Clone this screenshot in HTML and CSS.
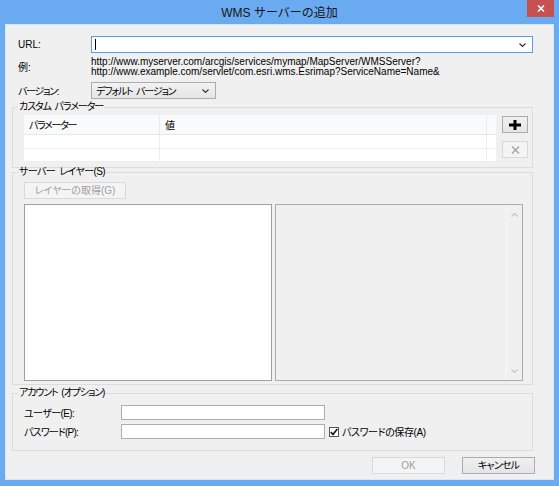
FILE: index.html
```html
<!DOCTYPE html>
<html lang="ja">
<head>
<meta charset="utf-8">
<title>WMS サーバーの追加</title>
<link rel="stylesheet" href="styles.css">
</head>
<body>
<div class="window">
  <div class="titlebar">
    <span class="title">WMS サーバーの追加</span>
    <div class="close">
      <svg width="8" height="7" viewBox="0 0 8 7"><path d="M1 0.5 L7 6.5 M7 0.5 L1 6.5" stroke="#fff" stroke-width="1.6" fill="none"/></svg>
    </div>
  </div>
  <div class="client">
    <div class="row url-row">
      <span class="label">URL:</span>
      <div class="combo">
        <span class="caret"></span>
        <svg class="chev" width="7" height="4" viewBox="0 0 7 4"><polyline points="0.5,0.5 3.5,3.5 6.5,0.5" fill="none" stroke="#333" stroke-width="1.1"/></svg>
      </div>
    </div>
    <div class="row example-row">
      <span class="label ex-label">例:</span>
      <div class="example">http://www.myserver.com/arcgis/services/mymap/MapServer/WMSServer?<br>http://www.example.com/servlet/com.esri.wms.Esrimap?ServiceName=Name&amp;</div>
    </div>
    <div class="row version-row">
      <span class="label ls13">バージョン:</span>
      <div class="select">
        <span class="ls12 ws">デフォルト バージョン</span>
        <svg class="chev" width="7" height="4" viewBox="0 0 7 4"><polyline points="0.5,0.5 3.5,3.5 6.5,0.5" fill="none" stroke="#333" stroke-width="1.1"/></svg>
      </div>
    </div>

    <fieldset class="group params">
      <legend class="ls11 ws">カスタム パラメーター</legend>
      <div class="params-body">
        <div class="grid">
          <div class="cell head ls13">パラメーター</div>
          <div class="cell head">値</div>
          <div class="cell head last"></div>
          <div class="cell"></div>
          <div class="cell"></div>
          <div class="cell last"></div>
          <div class="cell"></div>
          <div class="cell"></div>
          <div class="cell last"></div>
        </div>
        <div class="side-buttons">
          <button class="btn icon-btn">
            <svg width="12" height="10" viewBox="0 0 12 10"><rect x="0" y="3.5" width="12" height="3" fill="#000"/><rect x="4.5" y="0" width="3" height="10" fill="#000"/></svg>
          </button>
          <button class="btn icon-btn disabled">
            <svg width="9" height="8" viewBox="0 0 9 8"><path d="M1 0.5 L8 7.5 M8 0.5 L1 7.5" stroke="#a8a8a8" stroke-width="1.5" fill="none"/></svg>
          </button>
        </div>
      </div>
    </fieldset>

    <fieldset class="group layers">
      <legend class="ls06 ws">サーバー レイヤー(S)</legend>
      <button class="btn disabled get-btn">レイヤーの取得(G)</button>
      <div class="lists">
        <div class="list"></div>
        <div class="panel">
          <div class="scrollbar">
            <svg width="7" height="4" viewBox="0 0 7 4"><polyline points="0.5,3.5 3.5,0.5 6.5,3.5" fill="none" stroke="#c4c4c4" stroke-width="1.1"/></svg>
            <svg width="7" height="4" viewBox="0 0 7 4"><polyline points="0.5,0.5 3.5,3.5 6.5,0.5" fill="none" stroke="#c4c4c4" stroke-width="1.1"/></svg>
          </div>
        </div>
      </div>
    </fieldset>

    <fieldset class="group account">
      <legend class="ls11 ws">アカウント (オプション)</legend>
      <div class="field">
        <span class="flabel ls06">ユーザー(E):</span>
        <div class="input"></div>
      </div>
      <div class="field second">
        <span class="flabel ls08">パスワード(P):</span>
        <div class="input"></div>
        <span class="check">
          <span class="box"><svg width="8" height="8" viewBox="0 0 8 8"><polyline points="0.8,4 3,6.5 7.3,1" fill="none" stroke="#111" stroke-width="1.6"/></svg></span>
          <span class="check-text ls04">パスワードの保存(A)</span>
        </span>
      </div>
    </fieldset>

    <div class="footer">
      <button class="btn disabled dlg-btn">OK</button>
      <button class="btn dlg-btn ls08">キャンセル</button>
    </div>
  </div>
</div>
</body>
</html>
```

FILE: styles.css
```css
* { box-sizing: border-box; }
html, body { margin: 0; padding: 0; }
body {
  width: 559px;
  height: 486px;
  overflow: hidden;
  background: #6aaaf0;
  font-family: "Liberation Sans", "Noto Sans CJK JP", sans-serif;
  font-size: 10px;
  color: #000;
  font-feature-settings: "palt";
}
.ls04 { letter-spacing: -0.4px; }
.ls06 { letter-spacing: -0.6px; }
.ls08 { letter-spacing: -0.8px; }
.ls11 { letter-spacing: -1.1px; }
.ls12 { letter-spacing: -1.2px; }
.ls13 { letter-spacing: -1.3px; }
.ws { word-spacing: 2px; }
.window {
  position: relative;
  height: 486px;
  display: flex;
  flex-direction: column;
  padding: 0 5px 6px;
}
.titlebar {
  height: 24px;
  flex: none;
  display: flex;
  align-items: center;
  justify-content: center;
  padding-bottom: 1px;
}
.title {
  font-size: 12px;
  color: #141414;
  font-feature-settings: normal;
}
.close {
  position: absolute;
  top: 0;
  right: 5px;
  width: 27px;
  height: 17px;
  background: #c75050;
  display: flex;
  align-items: center;
  justify-content: center;
}
.client {
  flex: 1;
  background: #f0f0f0;
  border: 1px solid #d9e6f5;
  padding: 11px 20px 0 6px;
  display: flex;
  flex-direction: column;
}
.row {
  display: flex;
  align-items: center;
  padding-left: 6px;
}
.label { width: 73px; flex: none; }
.url-row { height: 17px; }
.combo {
  flex: 1;
  height: 17px;
  background: #fff;
  border: 1px solid #569de5;
  display: flex;
  align-items: center;
  justify-content: space-between;
  padding: 0 6px 0 3px;
}
.caret { width: 1px; height: 11px; background: #000; }
.example-row { align-items: flex-start; margin-top: 4px; }
.ex-label { padding-top: 2px; }
.example { line-height: 10px; }
.version-row { margin-top: 5px; height: 17px; }
.select {
  width: 125px;
  height: 17px;
  border: 1px solid #acacac;
  background: linear-gradient(#f2f2f2, #e5e5e5);
  display: flex;
  align-items: center;
  justify-content: space-between;
  padding: 0 6px 0 4px;
}

.group {
  margin: 0;
  min-width: 0;
  border: 1px solid #dcdcdc;
  padding: 0 4px 5px 11px;
}
.group legend {
  margin-left: -6px;
  padding: 0 1px;
  line-height: 8px;
  height: 8px;
}
.params { margin-top: 4px; padding-top: 4px; }
.params-body { display: flex; gap: 6px; align-items: flex-start; }
.grid {
  width: 472px;
  height: 47px;
  background: #fff;
  display: grid;
  grid-template-columns: 136px 327px 9px;
  grid-template-rows: 20px 14px 13px;
}
.cell {
  border-right: 1px solid #eeeeee;
  border-bottom: 1px solid #efefef;
  padding-left: 5px;
  display: flex;
  align-items: center;
}
.cell.head {
  background: #f9fafb;
  border-right-color: #e6ebf0;
  border-bottom-color: #e3e9ef;
}
.cell.last { border-right: none; }
.side-buttons {
  display: flex;
  flex-direction: column;
  gap: 8px;
  margin-top: 1px;
}
.btn {
  height: 17px;
  margin: 0;
  padding: 0;
  border: 1px solid #acacac;
  background: linear-gradient(#f0f0f0, #e5e5e5);
  font: inherit;
  color: #000;
  display: flex;
  align-items: center;
  justify-content: center;
  line-height: 1;
}
.btn.disabled {
  border-color: #d9d9d9;
  background: #f4f4f4;
  color: #a0a0a0;
}
.icon-btn { width: 26px; }

.layers { padding-top: 6px; padding-bottom: 3px; }
.get-btn { width: 102px; }
.lists {
  margin-top: 5px;
  display: grid;
  grid-template-columns: 248px 248px;
  gap: 3px;
  height: 177px;
}
.list {
  background: #fff;
  border: 1px solid #a0a0a0;
}
.panel {
  background: #f0f0f0;
  border: 1px solid #ababab;
  display: flex;
  justify-content: flex-end;
}
.scrollbar {
  width: 16px;
  border-left: 1px solid #f7f7f7;
  display: flex;
  flex-direction: column;
  align-items: center;
  justify-content: space-between;
  padding: 8px 0 7px;
}

.account { margin-top: 4px; padding-top: 8px; padding-bottom: 11px; }
.field { display: flex; align-items: center; height: 15px; }
.field.second { margin-top: 4px; }
.flabel { width: 97px; flex: none; }
.input {
  width: 204px;
  height: 15px;
  background: #fff;
  border: 1px solid #abadb3;
}
.check { display: flex; align-items: center; margin-left: 4px; }
.box {
  width: 10px;
  height: 10px;
  border: 1px solid #555;
  background: #fff;
  display: flex;
  align-items: center;
  justify-content: center;
}
.check-text { margin-left: 3px; }

.footer {
  margin-top: 6px;
  margin-right: -2px;
  display: flex;
  justify-content: flex-end;
  gap: 17px;
}
.dlg-btn { width: 73px; }
```
